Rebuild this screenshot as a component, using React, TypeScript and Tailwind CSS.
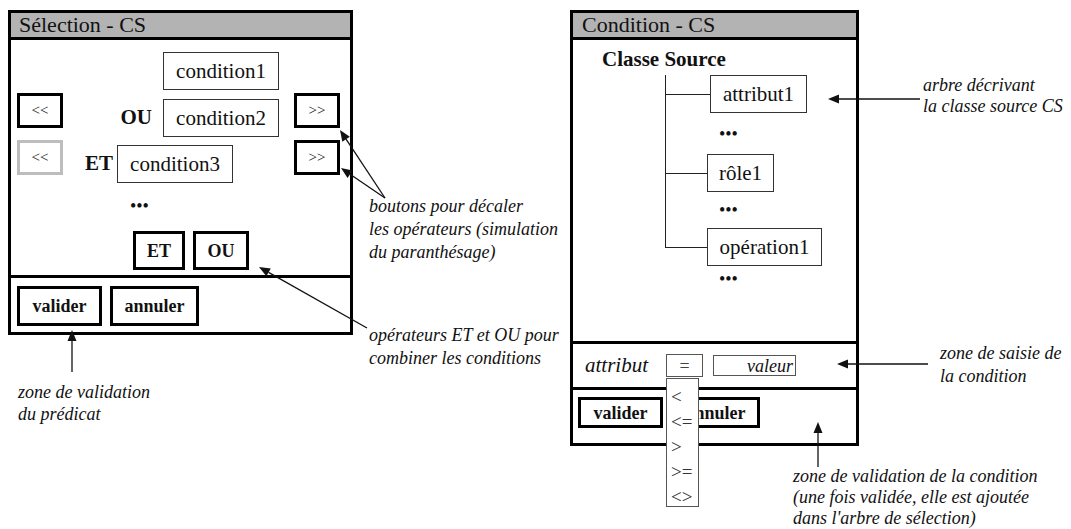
import React from "react";

// Arrow with a filled head at (x2, y2)
function Arrow({ x1, y1, x2, y2 }: { x1: number; y1: number; x2: number; y2: number }) {
  const dx = x2 - x1;
  const dy = y2 - y1;
  const len = Math.hypot(dx, dy);
  const ux = dx / len;
  const uy = dy / len;
  const L = 11;
  const W = 4.5;
  const bx = x2 - ux * L;
  const by = y2 - uy * L;
  const pts = `${x2},${y2} ${bx - uy * W},${by + ux * W} ${bx + uy * W},${by - ux * W}`;
  return (
    <g>
      <line x1={x1} y1={y1} x2={bx} y2={by} stroke="#111" strokeWidth={1.3} />
      <polygon points={pts} fill="#111" />
    </g>
  );
}

function CondBox({ label, w = 116 }: { label: string; w?: number }) {
  return (
    <div
      className="h-[38px] flex items-center justify-center border border-[#333] text-[21px] leading-none shrink-0"
      style={{ width: w }}
    >
      {label}
    </div>
  );
}

function ShiftBtn({ label, muted }: { label: string; muted?: boolean }) {
  return (
    <div
      className={
        "w-[46px] h-[35px] border-[3px] flex items-center justify-center text-[15px] leading-none shrink-0 " +
        (muted ? "border-[#bdbdbd]" : "border-black")
      }
    >
      {label}
    </div>
  );
}

function BoldBtn({ label, w, h }: { label: string; w: number; h: number }) {
  return (
    <div
      className="border-[3px] border-black flex items-center justify-center font-bold text-[18px] leading-none shrink-0"
      style={{ width: w, height: h }}
    >
      {label}
    </div>
  );
}

function Dots() {
  return <div className="text-[18px] leading-none">•••</div>;
}

export default function App() {
  return (
    <div className="font-serif">
      <div className="relative w-[1071px] h-[529px] bg-white overflow-hidden font-['Liberation_Serif'] text-[#111]">
        <div className="flex items-start pt-[10px] pl-[8px]">
          {/* Sélection window */}
          <div className="w-[345px] h-[325px] border-[3px] border-black flex flex-col">
            <div className="h-[27px] bg-[#b3b3b3] border-b-[3px] border-black pl-[8px] text-[22px] leading-[24px]">
              Sélection - CS
            </div>
            <div className="h-[238px] border-b-[3px] border-black flex flex-col">
              <div className="pt-[12px] pl-[152px]">
                <CondBox label="condition1" />
              </div>
              <div className="flex items-start mt-[3px]">
                <div className="ml-[6px]">
                  <ShiftBtn label="<<" />
                </div>
                <div className="w-[100px] h-[38px] mt-[6px] flex items-center justify-end pr-[11px] font-bold text-[21px]">
                  OU
                </div>
                <div className="mt-[6px]">
                  <CondBox label="condition2" />
                </div>
                <div className="ml-[15px]">
                  <ShiftBtn label=">>" />
                </div>
              </div>
              <div className="flex items-start mt-[3px]">
                <div className="ml-[6px]">
                  <ShiftBtn label="<<" muted />
                </div>
                <div className="w-[54px] h-[38px] mt-[5px] flex items-center justify-end pr-[4px] font-bold text-[21px]">
                  ET
                </div>
                <div className="mt-[5px]">
                  <CondBox label="condition3" />
                </div>
                <div className="ml-[61px]">
                  <ShiftBtn label=">>" />
                </div>
              </div>
              <div className="h-[20px] mt-[13px] pl-[119px] flex items-center">
                <Dots />
              </div>
              <div className="flex gap-[8px] pl-[122px] mt-[15px]">
                <BoldBtn label="ET" w={52} h={39} />
                <BoldBtn label="OU" w={56} h={39} />
              </div>
            </div>
            <div className="flex-1 flex items-start gap-[8px] pt-[8px] pl-[6px]">
              <BoldBtn label="valider" w={85} h={40} />
              <BoldBtn label="annuler" w={89} h={40} />
            </div>
          </div>

          {/* Condition window */}
          <div className="ml-[217px] w-[289px] h-[436px] border-[3px] border-black flex flex-col">
            <div className="h-[27px] bg-[#b3b3b3] border-b-[3px] border-black pl-[9px] text-[22px] leading-[24px]">
              Condition - CS
            </div>
            <div className="h-[304px] border-b-[3px] border-black flex flex-col">
              <div className="mt-[7px] pl-[29px] font-bold text-[21px] leading-[24px]">Classe Source</div>
              <div className="relative ml-[92px] mt-[4px]">
                <div className="absolute left-0 top-0 w-px h-[172px] bg-[#222]" />
                <div className="flex items-center h-[38px]">
                  <div className="w-[45px] h-px bg-[#222]" />
                  <CondBox label="attribut1" w={97} />
                </div>
                <div className="h-[41px] pl-[54px] flex items-center">
                  <Dots />
                </div>
                <div className="flex items-center h-[38px]">
                  <div className="w-[42px] h-px bg-[#222]" />
                  <CondBox label="rôle1" w={67} />
                </div>
                <div className="h-[36px] pl-[54px] flex items-center">
                  <Dots />
                </div>
                <div className="flex items-center h-[38px]">
                  <div className="w-[42px] h-px bg-[#222]" />
                  <CondBox label="opération1" w={115} />
                </div>
                <div className="h-[26px] pl-[54px] flex items-center">
                  <Dots />
                </div>
              </div>
            </div>
            <div className="h-[46px] border-b-[3px] border-black flex items-center">
              <div className="w-[93px] pl-[12px] italic text-[21px] leading-none">attribut</div>
              <div className="w-[37px] h-[23px] border border-[#555] flex items-center justify-center text-[18px] text-[#444] leading-none">
                =
              </div>
              <div className="ml-[10px] w-[83px] h-[21px] border border-[#555] flex items-center justify-end pr-[2px] italic text-[18px] leading-none">
                valeur
              </div>
            </div>
            <div className="flex-1 flex items-start gap-[8px] pt-[7px] pl-[5px]">
              <BoldBtn label="valider" w={85} h={31} />
              <BoldBtn label="annuler" w={89} h={31} />
            </div>
          </div>
        </div>

        {/* operator dropdown */}
        <div className="absolute left-[666px] top-[378px] w-[33px] h-[129px] overflow-hidden border border-[#555] bg-white pt-[5px] flex flex-col text-[19px] text-[#333]">
          {["<", "<=", ">", ">=", "<>"].map((op) => (
            <div key={op} className="h-[25px] leading-[25px] pl-[4px]">
              {op}
            </div>
          ))}
        </div>

        {/* annotation arrows */}
        <svg className="absolute left-0 top-0 pointer-events-none" width={1071} height={529}>
          <Arrow x1={385} y1={198} x2={340} y2={130} />
          <Arrow x1={385} y1={198} x2={341} y2={168} />
          <Arrow x1={367} y1={328} x2={259} y2={267} />
          <Arrow x1={72} y1={372} x2={72} y2={330} />
          <Arrow x1={920} y1={99} x2={828} y2={99} />
          <Arrow x1={928} y1={364} x2={837} y2={364} />
          <Arrow x1={818} y1={467} x2={818} y2={422} />
        </svg>

        {/* annotation texts */}
        <div className="absolute left-[369px] top-[195px] italic text-[18px] leading-[23px]">
          <div>boutons pour décaler</div>
          <div>les opérateurs (simulation</div>
          <div>du paranthésage)</div>
        </div>
        <div className="absolute left-[369px] top-[324px] italic text-[18px] leading-[23px]">
          <div>opérateurs ET et OU pour</div>
          <div>combiner les conditions</div>
        </div>
        <div className="absolute left-[18px] top-[381px] italic text-[18px] leading-[22px]">
          <div>zone de validation</div>
          <div>du prédicat</div>
        </div>
        <div className="absolute left-[923px] top-[75px] italic text-[18px] leading-[21px]">
          <div>arbre décrivant</div>
          <div>la classe source CS</div>
        </div>
        <div className="absolute left-[940px] top-[342px] italic text-[18px] leading-[23px]">
          <div>zone de saisie de</div>
          <div>la condition</div>
        </div>
        <div className="absolute left-[793px] top-[466px] italic text-[18px] leading-[21px]">
          <div>zone de validation de la condition</div>
          <div>(une fois validée, elle est ajoutée</div>
          <div>dans l'arbre de sélection)</div>
        </div>
      </div>
    </div>
  );
}
